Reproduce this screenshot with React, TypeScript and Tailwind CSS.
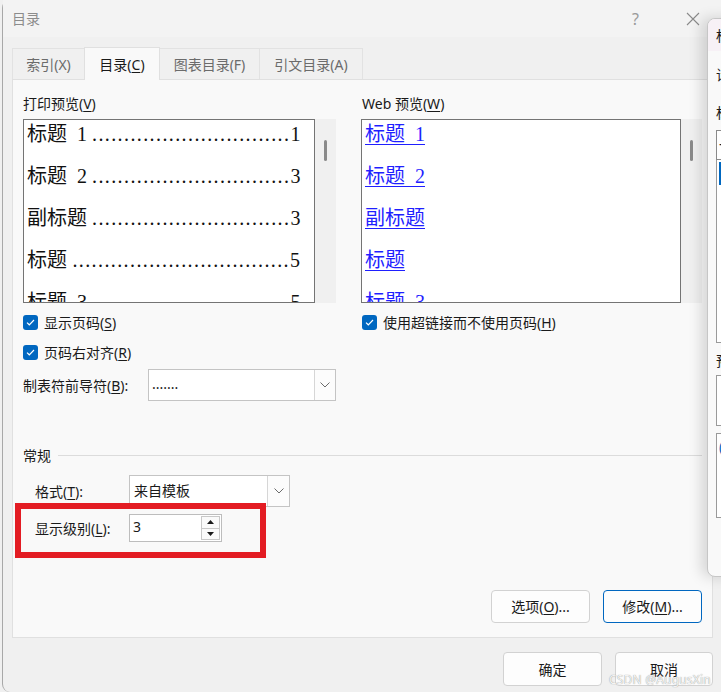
const ui = { fontFamily: '"Noto Sans", "Noto Sans CJK SC", sans-serif' };
const serif = { fontFamily: '"Liberation Serif", "Noto Sans CJK SC", serif' };

function Check() {
  return (
    <span className="flex h-[15px] w-[15px] shrink-0 items-center justify-center rounded-[3px] bg-[#0067c0]">
      <svg width="9" height="7" viewBox="0 0 9 7" fill="none">
        <polyline points="1,3.6 3.3,5.8 8,1" stroke="#fff" strokeWidth="1.2" />
      </svg>
    </span>
  );
}

function Chevron() {
  return (
    <svg width="10" height="6" viewBox="0 0 10 6" fill="none">
      <polyline points="0.5,0.5 5,5 9.5,0.5" stroke="#6b6b6b" strokeWidth="1" />
    </svg>
  );
}

function Key({ k }: { k: string }) {
  return <span className="underline underline-offset-2">{k}</span>;
}

function Scroll() {
  return (
    <div className="relative w-[21px] bg-[#f0f0f0]">
      <div className="absolute left-[9px] top-[21px] h-[21px] w-[3px] rounded-full bg-[#8a8a8a]" />
    </div>
  );
}

const printRows = [
  { t: '标题\u00a0\u00a01\u00a0', d: 31, n: '1' },
  { t: '标题\u00a0\u00a02\u00a0', d: 31, n: '3' },
  { t: '副标题\u00a0', d: 31, n: '3' },
  { t: '标题', d: 34, n: '5' },
  { t: '标题\u00a0\u00a03\u00a0', d: 31, n: '5' },
];

const webRows = ['标题\u00a0\u00a01', '标题\u00a0\u00a02', '副标题', '标题', '标题\u00a0\u00a03'];

function Button({ children, primary, w }: { children: React.ReactNode; primary?: boolean; w: string }) {
  return (
    <div
      className={`flex items-center justify-center rounded-[4px] border bg-[#fdfdfd] text-[14px] text-[#1a1a1a] ${w} ${
        primary ? 'border-[#0067c0]' : 'border-[#d2d2d2]'
      }`}
    >
      {children}
    </div>
  );
}

export default function App() {
  return (
    <div className="relative h-[692px] w-[721px] overflow-hidden bg-[#f0f0f0] text-[#1a1a1a]" style={ui}>
      <div className="ml-[2px] flex h-full flex-col rounded-l-[8px] border-l border-[#a8a8a8]">
        {/* title bar */}
        <div className="flex h-[37px] items-center bg-[#f3f3f3] pl-[9px]">
          <span className="text-[14px] text-[#8c8c8c]">目录</span>
          <span className="ml-auto mr-[47px] text-[16px] text-[#9a9a9a]">?</span>
          <svg className="mr-[21px]" width="14" height="14" viewBox="0 0 14 14" fill="none">
            <path d="M1 1L13 13M13 1L1 13" stroke="#8a8a8a" strokeWidth="1.1" />
          </svg>
        </div>

        {/* tabs */}
        <div className="mt-[10px] flex h-[33px] items-start pl-[9px] text-[14px]">
          <div className="mt-[1px] flex h-[31px] w-[72px] items-center justify-center border-l border-t border-[#e2e2e2] text-[#6b6b6b]">
            索引(X)
          </div>
          <div className="relative z-10 flex h-[33px] w-[76px] items-center justify-center border-x border-t border-[#e0e0e0] bg-[#f9f9f9] text-[#1a1a1a]">
            目录(<Key k="C" />)
          </div>
          <div className="mt-[1px] flex h-[31px] w-[100px] items-center justify-center border-t border-r border-[#e2e2e2] text-[#6b6b6b]">
            图表目录(F)
          </div>
          <div className="mt-[1px] flex h-[31px] w-[103px] items-center justify-center border-t border-r border-[#e2e2e2] text-[#6b6b6b]">
            引文目录(A)
          </div>
        </div>

        {/* panel */}
        <div className="-mt-px ml-[9px] flex h-[559px] w-[701px] flex-col border border-[#e0e0e0] bg-[#f9f9f9] pl-[10px] pr-[10px] pt-[14px] text-[14px]">
          <div className="flex h-[345px]">
            <div className="flex w-[313px] flex-col">
              <div className="h-[20px] leading-[20px]">
                打印预览(<Key k="V" />)
              </div>
              <div className="mt-[5px] flex h-[184px]">
                <div className="w-[292px] overflow-hidden border border-[#747474] bg-white pl-[3px] pr-[14px] text-[20px] text-[#111]" style={serif}>
                  {printRows.map((r, i) => (
                    <div key={i} className="flex h-[42px] whitespace-nowrap leading-[28px]">
                      <span className="shrink-0">{r.t}</span>
                      <span className="flex-1 text-right tracking-[1.4px]">{'.'.repeat(r.d)}</span>
                      <span className="shrink-0">{r.n}</span>
                    </div>
                  ))}
                </div>
                <Scroll />
              </div>
              <div className="mt-[9px] flex h-[20px] items-center gap-[6px]">
                <Check />
                <span>
                  显示页码(<Key k="S" />)
                </span>
              </div>
              <div className="mt-[10px] flex h-[20px] items-center gap-[6px]">
                <Check />
                <span>
                  页码右对齐(<Key k="R" />)
                </span>
              </div>
              <div className="mt-[7px] flex h-[32px] items-center">
                <span className="w-[125px]">
                  制表符前导符(<Key k="B" />):
                </span>
                <div className="flex h-full w-[188px] border border-[#c4c4c4] bg-white">
                  <span className="flex-1 pl-[3px] leading-[28px]">.......</span>
                  <span className="flex w-[21px] items-center justify-center border-l border-[#d6d6d6] bg-[#fcfcfc]">
                    <Chevron />
                  </span>
                </div>
              </div>
            </div>
            <div className="ml-[12px] w-px bg-[#c4c4c4]" />
            <div className="ml-[13px] flex w-[341px] flex-col">
              <div className="h-[20px] pl-px leading-[20px]">
                Web 预览(<Key k="W" />)
              </div>
              <div className="mt-[5px] flex h-[184px]">
                <div className="w-[320px] overflow-hidden border border-[#747474] bg-white pl-[3px] text-[20px] text-[#1f1fff]" style={serif}>
                  {webRows.map((t, i) => (
                    <div key={i} className="h-[42px] whitespace-nowrap leading-[28px]">
                      <span className="underline decoration-1 underline-offset-[3px]">{t}</span>
                    </div>
                  ))}
                </div>
                <Scroll />
              </div>
              <div className="mt-[9px] flex h-[20px] items-center gap-[6px] pl-px">
                <Check />
                <span>
                  使用超链接而不使用页码(<Key k="H" />)
                </span>
              </div>
            </div>
          </div>

          <div className="mt-[6px] flex h-[20px] items-center">
            <span>常规</span>
            <div className="ml-[7px] h-px flex-1 bg-[#dcdcdc]" />
          </div>
          <div className="mt-[10px] flex h-[32px] items-center pl-[12px]">
            <span className="w-[94px]">
              格式(<Key k="T" />):
            </span>
            <div className="flex h-full w-[161px] border border-[#c4c4c4] bg-white">
              <span className="flex-1 pl-[4px] leading-[30px]">来自模板</span>
              <span className="flex w-[22px] items-center justify-center border-l border-[#d6d6d6] bg-[#fcfcfc]">
                <Chevron />
              </span>
            </div>
          </div>
          <div className="mt-[7px] flex h-[28px] items-center pl-[12px]">
            <span className="w-[94px]">
              显示级别(<Key k="L" />):
            </span>
            <div className="flex h-full w-[93px] border border-[#bdbdbd] bg-white">
              <span className="flex-1 pl-[3px] leading-[24px]">3</span>
              <div className="my-[1px] mr-[1px] flex w-[19px] flex-col">
                <span className="flex flex-1 items-center justify-center border border-[#c8c8c8] bg-[#fafafa]">
                  <svg width="7" height="4" viewBox="0 0 7 4">
                    <polygon points="0,4 3.5,0 7,4" fill="#1a1a1a" />
                  </svg>
                </span>
                <span className="flex flex-1 items-center justify-center border border-t-0 border-[#c8c8c8] bg-[#fafafa]">
                  <svg width="7" height="4" viewBox="0 0 7 4">
                    <polygon points="0,0 3.5,4 7,0" fill="#1a1a1a" />
                  </svg>
                </span>
              </div>
            </div>
          </div>

          <div className="mt-auto flex justify-end gap-[13px] pb-[14px]">
            <Button w="h-[33px] w-[99px]">
              选项(<Key k="O" />)...
            </Button>
            <Button w="h-[33px] w-[99px]" primary>
              修改(<Key k="M" />)...
            </Button>
          </div>
        </div>

        {/* footer */}
        <div className="mt-[14px] flex justify-end gap-[13px] pr-[8px]">
          <Button w="h-[34px] w-[99px]">确定</Button>
          <Button w="h-[34px] w-[98px]">取消</Button>
        </div>
      </div>

      {/* red annotation */}
      <div className="absolute left-[15px] top-[503px] h-[55px] w-[251px] border-[6px] border-[#e31c23]" />

      {/* second dialog peeking from the right */}
      <div className="absolute left-[707px] top-[18px] flex h-[559px] w-[220px] flex-col overflow-hidden rounded-[8px] border border-[#c6c6c6] bg-[#f9f9f9] text-[14px] shadow-[-6px_0_14px_rgba(0,0,0,0.14)]">
        <div className="flex h-[32px] items-center bg-[#f7f1f6] pl-[8px]">标记索引项</div>
        <div className="mt-[14px] pl-[8px] leading-[20px]">请键入样式名</div>
        <div className="mt-[18px] pl-[8px] leading-[20px]">标题</div>
        <div className="ml-[8px] mt-[7px] h-[30px] border border-[#8a8a8a] bg-white pl-[2px] leading-[28px]">一</div>
        <div className="ml-[8px] h-[183px] border border-t-0 border-[#9a9a9a] bg-white p-[2px]">
          <div className="h-[23px] bg-[#0067c0]" />
        </div>
        <div className="mt-[8px] pl-[8px] leading-[20px]">预览</div>
        <div className="ml-[8px] mt-[4px] h-[51px] border border-[#9a9a9a] bg-white" />
        <div className="ml-[8px] mt-[7px] h-[85px] border border-[#9a9a9a] bg-white pl-[2px] pt-[2px] text-[#0067c0]">(</div>
      </div>

      {/* watermark */}
      <div className="absolute left-[609px] top-[671px] text-[12px] tracking-[0.2px] text-[#f4f4f4] [text-shadow:0_0_1px_#7a7a7a]">
        CSDN @AugusXin
      </div>
    </div>
  );
}
